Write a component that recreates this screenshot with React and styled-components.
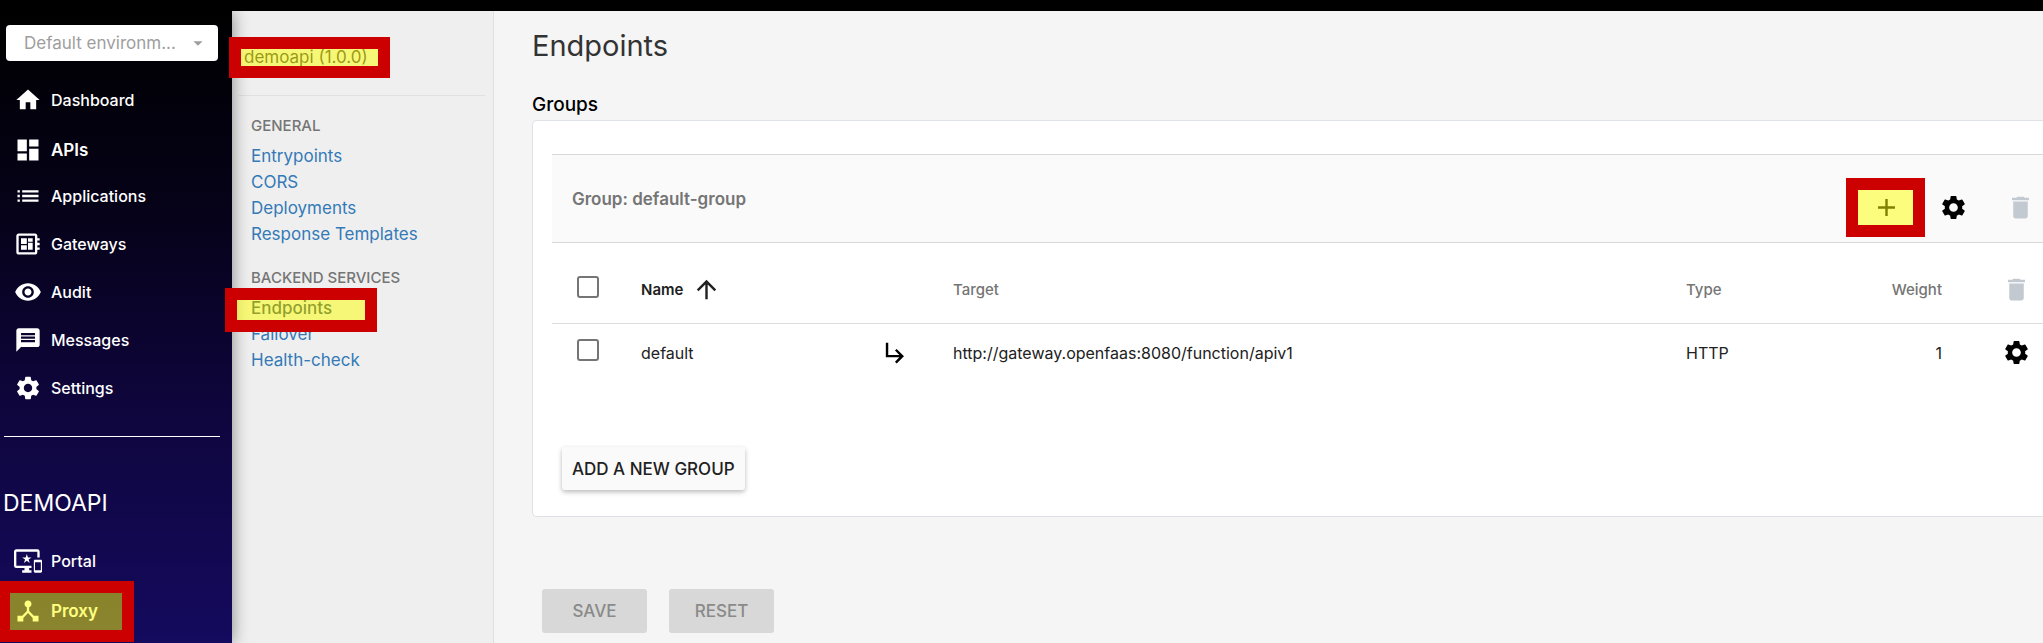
import React from "react";
import styled, { createGlobalStyle, css } from "styled-components";
import {
  MdAdd,
  MdArrowDropDown,
  MdArrowUpward,
  MdDashboard,
  MdDelete,
  MdDeveloperBoard,
  MdDeviceHub,
  MdHome,
  MdImportantDevices,
  MdList,
  MdMessage,
  MdSettings,
  MdSubdirectoryArrowRight,
  MdVisibility,
} from "react-icons/md";

const GlobalStyle = createGlobalStyle`
  *, *::before, *::after { box-sizing: border-box; }
  body {
    margin: 0;
    background: #f5f5f5;
    color: #212121;
    font-family: Inter, "Liberation Sans", sans-serif;
    font-size: 16px;
  }
  button, select { font-family: inherit; }
  svg { display: block; flex: none; }
`;

const Page = styled.div`
  display: flex;
  flex-direction: column;
  min-height: 100vh;
  overflow: hidden;
`;

const TopBar = styled.header`
  position: relative;
  z-index: 2;
  height: 11px;
  background: #000;
`;

const Columns = styled.div`
  display: flex;
  flex: 1;
`;

/* Tutorial marker: a thick red frame with a translucent yellow fill. */
const Marker = styled.span`
  position: absolute;
  z-index: 3;
  top: ${(p) => p.$top}px;
  left: ${(p) => p.$left}px;
  width: ${(p) => p.$width}px;
  height: ${(p) => p.$height}px;
  border: 12px solid #c00;
  background: rgba(255, 255, 0, 0.5);
  background-clip: padding-box;
  pointer-events: none;
`;

const Sidebar = styled.aside`
  position: relative;
  z-index: 1;
  flex: none;
  width: 232px;
  padding-top: 14px;
  background: linear-gradient(#000, #060219 32%, #0f0640 66%, #140a5e);
  box-shadow: 0 0 16px rgba(0, 0, 0, 0.45);
  color: #fff;
`;

const EnvironmentPicker = styled.div`
  display: grid;
  align-items: center;
  margin: 0 14px 15px 6px;

  > * { grid-area: 1 / 1; }
  > svg { justify-self: end; margin-right: 9px; color: #9e9e9e; pointer-events: none; }
`;

const EnvironmentSelect = styled.select`
  appearance: none;
  width: 100%;
  height: 36px;
  padding: 0 40px 0 18px;
  border: 0;
  border-radius: 4px;
  background: #fff;
  color: #9e9e9e;
  font-size: 17px;
`;

const NavLink = styled.a`
  position: relative;
  display: flex;
  align-items: center;
  gap: 9px;
  height: 48px;
  padding-left: 14px;
  color: #fff;
  font-size: 16px;
  font-weight: 500;
  text-decoration: none;
  ${(p) => p.$active && css`
    padding-top: 4px;
    font-size: 17px;
    font-weight: 600;
  `}
`;

const SidebarRule = styled.hr`
  height: 1px;
  margin: 24px 12px 50px 4px;
  border: 0;
  background: #fff;
`;

const ApiName = styled.h2`
  margin: 0 0 18px 3px;
  font-size: 23px;
  font-weight: 400;
  line-height: 32px;
`;

const SubNav = styled.nav`
  flex: none;
  width: 262px;
  padding-top: 36px;
  border-right: 1px solid #e0e0e0;
  background: #efefef;
`;

const ApiVersion = styled.a`
  position: relative;
  display: block;
  padding: 0 12px 27px;
  color: #333;
  font-size: 17px;
  line-height: 21px;
  text-decoration: none;
`;

const SubNavRule = styled.hr`
  height: 1px;
  margin: 0 8px 20px 7px;
  border: 0;
  background: #e0e0e0;
`;

const SubNavHeading = styled.h3`
  margin: 0 0 7px;
  color: #757575;
  font-size: 15px;
  font-weight: 500;
  line-height: 20px;
`;

const SubNavSection = styled.section`
  padding-left: 19px;
  margin-bottom: 21px;
`;

const SubNavLink = styled.a`
  position: relative;
  display: block;
  color: ${(p) => (p.$active ? "#23425c" : "#337ab7")};
  font-size: 17px;
  font-weight: ${(p) => (p.$active ? 500 : 400)};
  line-height: 26px;
  text-decoration: none;
`;

const Main = styled.main`
  flex: 1;
  min-width: 0;
  padding: 15px 0 10px 38px;
`;

const Title = styled.h1`
  margin: 0;
  color: #333;
  font-size: 29px;
  font-weight: 400;
  line-height: 40px;
`;

const SectionTitle = styled.h2`
  margin: 26px 0 3px;
  color: #000;
  font-size: 19px;
  font-weight: 500;
  line-height: 25px;
`;

const Card = styled.section`
  padding: 33px 0 26px 19px;
  border: 1px solid #dee1e5;
  border-right: 0;
  border-radius: 5px 0 0 5px;
  background: #fff;
`;

const GroupBar = styled.header`
  display: flex;
  justify-content: space-between;
  align-items: center;
  height: 89px;
  padding: 0 8px 0 20px;
  border: solid #d8d8d8;
  border-width: 1px 0;
  background: #fafafa;
`;

const GroupName = styled.h3`
  margin: 0;
  color: #757575;
  font-size: 17px;
  font-weight: 600;
`;

const GroupActions = styled.div`
  display: flex;
  align-items: center;
  padding-top: 18px;
`;

const IconButton = styled.button`
  position: relative;
  display: block;
  padding: 0;
  border: 0;
  background: none;
  color: ${(p) => (p.disabled ? "#c2c9d1" : "#000")};
  margin-left: ${(p) => p.$gap || 0}px;
`;

const Endpoints = styled.table`
  width: 100%;
  table-layout: fixed;
  border-collapse: collapse;
  color: #212121;
`;

const Col = styled.col`
  width: ${(p) => (p.$width ? `${p.$width}px` : "auto")};
`;

const HeadCell = styled.th`
  height: 80px;
  padding: 14px 0 0;
  border-bottom: 1px solid #dcdcdc;
  color: ${(p) => (p.$sorted ? "#212121" : "#757575")};
  font-size: 15px;
  font-weight: 500;
  text-align: ${(p) => p.$align || "left"};
`;

const Cell = styled.td`
  height: 59px;
  padding: 0;
  text-align: ${(p) => p.$align || "left"};
`;

const SortButton = styled.button`
  display: flex;
  align-items: center;
  gap: 9px;
  padding: 0;
  border: 0;
  background: none;
  color: inherit;
  font-size: 15px;
  font-weight: 600;
`;

const Checkbox = styled.input`
  appearance: none;
  display: block;
  width: 22px;
  height: 22px;
  margin: 0 0 6px 25px;
  border: 2px solid #757575;
  border-radius: 3px;
`;

const AddButton = styled.button`
  display: block;
  height: 43px;
  margin: 65px 0 0 10px;
  padding: 0 10px;
  border: 0;
  border-radius: 3px;
  background: #fafafa;
  box-shadow: 0 2px 5px rgba(0, 0, 0, 0.28);
  color: #212121;
  font-size: 17px;
  font-weight: 500;
`;

const FormActions = styled.div`
  display: flex;
  gap: 22px;
  padding: 72px 0 0 10px;
`;

const FormButton = styled.button`
  min-width: 105px;
  height: 44px;
  border: 0;
  border-radius: 3px;
  background: #d8d8d8;
  color: #8a8a8a;
  font-size: 17px;
  font-weight: 500;
`;

const mainNav = [
  { label: "Dashboard", icon: MdHome },
  { label: "APIs", icon: MdDashboard, active: true },
  { label: "Applications", icon: MdList },
  { label: "Gateways", icon: MdDeveloperBoard },
  { label: "Audit", icon: MdVisibility },
  { label: "Messages", icon: MdMessage },
  { label: "Settings", icon: MdSettings },
];

const apiNav = [
  { label: "Portal", icon: MdImportantDevices },
  {
    label: "Proxy",
    icon: MdDeviceHub,
    active: true,
    marker: { $top: -4, $left: -2, $width: 136, $height: 61 },
  },
];

const sections = [
  {
    title: "GENERAL",
    links: [
      { label: "Entrypoints" },
      { label: "CORS" },
      { label: "Deployments" },
      { label: "Response Templates" },
    ],
  },
  {
    title: "BACKEND SERVICES",
    links: [
      {
        label: "Endpoints",
        active: true,
        marker: { $top: -7, $left: -26, $width: 152, $height: 44 },
      },
      { label: "Failover" },
      { label: "Health-check" },
    ],
  },
];

function NavItems({ items }) {
  return items.map(({ label, icon: Icon, active, marker }) => (
    <NavLink key={label} href="#" $active={active}>
      <Icon size={28} />
      {label}
      {marker && <Marker {...marker} />}
    </NavLink>
  ));
}

export default function App() {
  return (
    <Page>
      <GlobalStyle />
      <TopBar />
      <Columns>
        <Sidebar>
          <EnvironmentPicker>
            <EnvironmentSelect aria-label="Environment">
              <option>Default environm...</option>
            </EnvironmentSelect>
            <MdArrowDropDown size={22} />
          </EnvironmentPicker>
          <nav aria-label="Main">
            <NavItems items={mainNav} />
          </nav>
          <SidebarRule />
          <ApiName>DEMOAPI</ApiName>
          <nav aria-label="API">
            <NavItems items={apiNav} />
          </nav>
        </Sidebar>

        <SubNav aria-label="Proxy">
          <ApiVersion href="#">
            demoapi (1.0.0)
            <Marker $top={-10} $left={-3} $width={161} $height={41} />
          </ApiVersion>
          <SubNavRule />
          {sections.map((section) => (
            <SubNavSection key={section.title}>
              <SubNavHeading>{section.title}</SubNavHeading>
              {section.links.map((link) => (
                <SubNavLink key={link.label} href="#" $active={link.active}>
                  {link.label}
                  {link.marker && <Marker {...link.marker} />}
                </SubNavLink>
              ))}
            </SubNavSection>
          ))}
        </SubNav>

        <Main>
          <Title>Endpoints</Title>
          <SectionTitle>Groups</SectionTitle>
          <Card>
            <GroupBar>
              <GroupName>Group: default-group</GroupName>
              <GroupActions>
                <IconButton aria-label="Add endpoint">
                  <MdAdd size={29} />
                  <Marker $top={-15} $left={-26} $width={79} $height={59} />
                </IconButton>
                <IconButton aria-label="Edit group" $gap={38}>
                  <MdSettings size={29} />
                </IconButton>
                <IconButton aria-label="Delete group" $gap={38} disabled>
                  <MdDelete size={29} />
                </IconButton>
              </GroupActions>
            </GroupBar>
            <Endpoints>
              <colgroup>
                <Col $width={89} />
                <Col $width={240} />
                <Col $width={72} />
                <Col />
                <Col $width={140} />
                <Col $width={116} />
                <Col $width={101} />
              </colgroup>
              <thead>
                <tr>
                  <HeadCell>
                    <Checkbox type="checkbox" aria-label="Select all endpoints" />
                  </HeadCell>
                  <HeadCell $sorted>
                    <SortButton>
                      Name
                      <MdArrowUpward size={29} />
                    </SortButton>
                  </HeadCell>
                  <HeadCell />
                  <HeadCell>Target</HeadCell>
                  <HeadCell>Type</HeadCell>
                  <HeadCell $align="right">Weight</HeadCell>
                  <HeadCell>
                    <IconButton aria-label="Delete endpoints" $gap={60} disabled>
                      <MdDelete size={29} />
                    </IconButton>
                  </HeadCell>
                </tr>
              </thead>
              <tbody>
                <tr>
                  <Cell>
                    <Checkbox type="checkbox" aria-label="Select default" />
                  </Cell>
                  <Cell>default</Cell>
                  <Cell>
                    <MdSubdirectoryArrowRight size={29} color="#000" />
                  </Cell>
                  <Cell>http://gateway.openfaas:8080/function/apiv1</Cell>
                  <Cell>HTTP</Cell>
                  <Cell $align="right">1</Cell>
                  <Cell>
                    <IconButton aria-label="Edit default" $gap={60}>
                      <MdSettings size={29} />
                    </IconButton>
                  </Cell>
                </tr>
              </tbody>
            </Endpoints>
            <AddButton>ADD A NEW GROUP</AddButton>
          </Card>
          <FormActions>
            <FormButton disabled>SAVE</FormButton>
            <FormButton disabled>RESET</FormButton>
          </FormActions>
        </Main>
      </Columns>
    </Page>
  );
}
